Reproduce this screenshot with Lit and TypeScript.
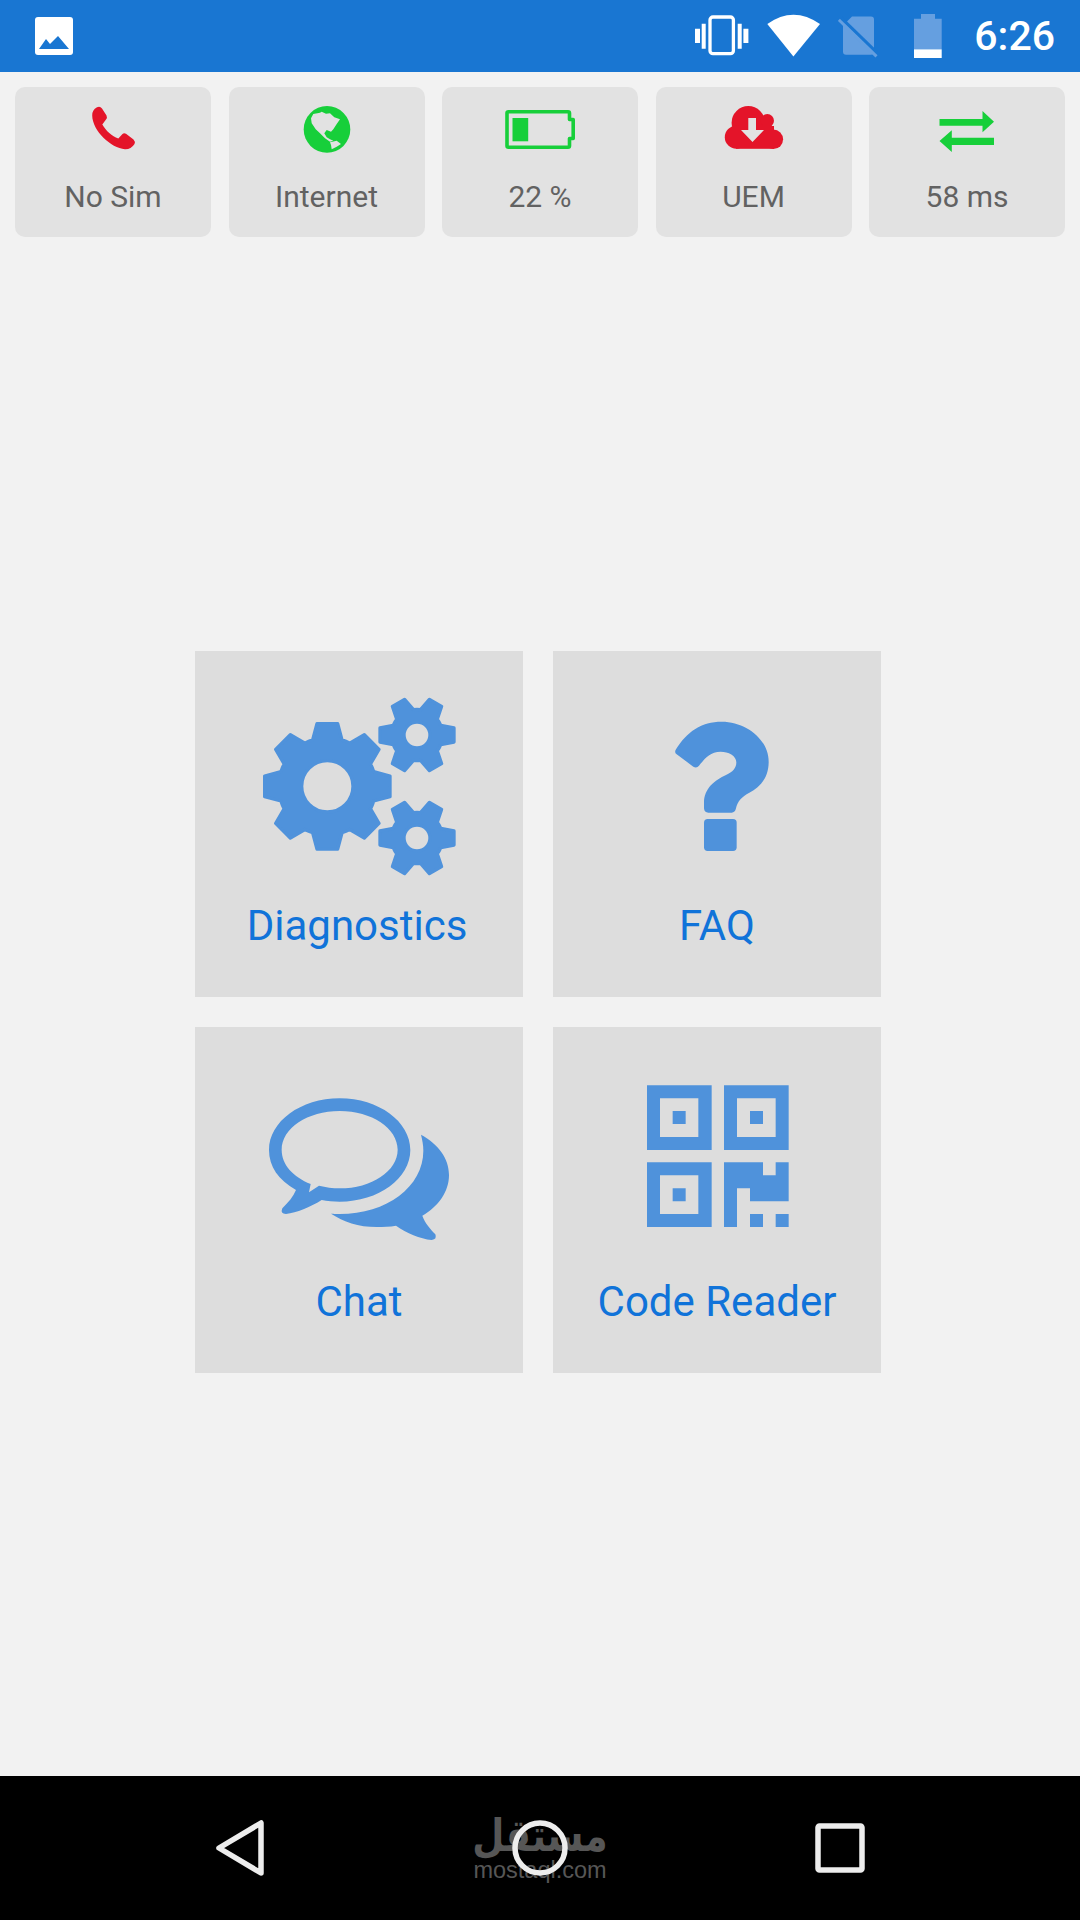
import { LitElement, html, svg, css, TemplateResult, SVGTemplateResult } from 'lit';
import { customElement } from 'lit/decorators.js';

// one gear outline, teeth start pointing up, hole cut with evenodd
function gearPath(
  cx: number,
  cy: number,
  teeth: number,
  rOuter: number,
  rRoot: number,
  tipHalf: number,
  baseHalf: number,
  rHole: number,
  startDeg = 0,
): string {
  const pt = (deg: number, across: number, r: number) => {
    const a = (deg * Math.PI) / 180;
    const ux = Math.sin(a);
    const uy = -Math.cos(a);
    return `${(cx + ux * r + uy * -across).toFixed(1)} ${(cy + uy * r + ux * across).toFixed(1)}`;
  };
  // tooth base sits on the root circle
  const rBase = Math.sqrt(rRoot * rRoot - baseHalf * baseHalf);
  let d = '';
  for (let i = 0; i < teeth; i++) {
    const deg = startDeg + (360 / teeth) * i;
    d += i === 0 ? `M${pt(deg, -baseHalf, rBase)}` : `A${rRoot} ${rRoot} 0 0 1 ${pt(deg, -baseHalf, rBase)}`;
    d += `L${pt(deg, -tipHalf, rOuter)}L${pt(deg, tipHalf, rOuter)}L${pt(deg, baseHalf, rBase)}`;
  }
  d += `A${rRoot} ${rRoot} 0 0 1 ${pt(startDeg, -baseHalf, rBase)}Z`;
  d += `M${cx - rHole} ${cy}a${rHole} ${rHole} 0 1 0 ${rHole * 2} 0a${rHole} ${rHole} 0 1 0 ${-rHole * 2} 0Z`;
  return d;
}

const RED = '#e41429';
const GREEN = '#17cf3a';
const TILE = '#e2e2e2';

const statusTiles: { label: string; icon: SVGTemplateResult }[] = [
  {
    label: 'No Sim',
    icon: svg`<path fill=${RED} d="M24 3.300Q27 1.800 29 4.500L33.500 11.500Q34.500 13.500 33 15.500L29.300 20.500C33 27 39 32 45.300 34.500L49.500 30Q51 28.500 53 29.800L60.500 35.500Q62.500 37.500 61.500 40Q58 45.500 52 45.300C38 44 19.500 27 19.200 11.500Q19 6 24 3.300Z"/>`,
  },
  {
    label: 'Internet',
    icon: svg`<circle cx="40" cy="25.400" r="23.300" fill=${GREEN}/>
      <path fill=${TILE} d="M24 14.300L26.300 10L33 8.700L34.700 7.700L39 9.800L43 9.300L47.300 13.300L53 15.300L49.700 20L46.300 25.300L44 27.700L39.700 26L37.300 29.300L39.700 33.300L43 35.300L46.300 36.700L43 37.700L38 34.300L33 29.300L28.700 25.300L24.700 19.300Z"/>
      <path fill=${TILE} d="M43 38.300L49.700 36.700L54 40L49.700 42.700L44.700 45.300L44 41Z"/>`,
  },
  {
    label: '22 %',
    icon: svg`<path fill="none" stroke=${GREEN} stroke-width="3.600" stroke-linejoin="round" d="M8.500 7.800H68Q69.500 7.800 69.500 9.300V15.500H73.200V34.500H69.500V41.700Q69.500 43.200 68 43.200H8.500Q7 43.200 7 41.700V9.300Q7 7.800 8.500 7.800Z"/>
      <rect x="12.500" y="14" width="15.700" height="23.300" fill=${GREEN}/>`,
  },
  {
    label: 'UEM',
    icon: svg`<g fill=${RED}>
        <circle cx="34.300" cy="18.700" r="16.700"/>
        <circle cx="53.300" cy="16.700" r="6.700"/>
        <circle cx="59.400" cy="35.300" r="9.700"/>
        <circle cx="22.300" cy="33.200" r="11.500"/>
        <rect x="22" y="22" width="38" height="22.800"/>
      </g>
      <path fill=${TILE} d="M34.300 14H42V26H50L38.500 38L27 26H34.300Z"/>`,
  },
  {
    label: '58 ms',
    icon: svg`<path fill=${GREEN} d="M12.500 15H55.500V7L67 17.700L55.500 28.300V21.700H12.500Z"/>
      <path fill=${GREEN} d="M67 33.700H24.800V26.300L12.500 37L24.800 48V41H67Z"/>`,
  },
];

const menuTiles: { label: string; viewBox: string; icon: SVGTemplateResult }[] = [
  {
    label: 'Diagnostics',
    viewBox: '15 33 984 690',
    icon: svg`<g stroke-width="10" stroke-linejoin="round">
      <path fill-rule="evenodd" d=${gearPath(412, 439, 8, 188, 146, 31, 44, 77)}/>
      <path fill-rule="evenodd" d=${gearPath(681, 285, 6, 111, 77, 21, 29, 39, 30)}/>
      <path fill-rule="evenodd" d=${gearPath(681, 594, 6, 111, 77, 21, 29, 39, 30)}/>
    </g>`,
  },
  {
    label: 'FAQ',
    viewBox: '9 33 984 690',
    icon: svg`<path d="M378 328C410 275 455 245 515 245C590 245 656 300 656 365C656 415 630 440 598 458C575 470 562 485 558 505Q555 518 545 518L475 518Q463 518 462 505L462 488C462 445 495 420 528 405C548 396 559 385 559 367C559 347 535 335 512 335C480 335 465 355 447 377Q440 386 430 380L380 343Q372 337 378 328Z"/>
      <rect x="462" y="537" width="98" height="96" rx="11"/>`,
  },
  {
    label: 'Chat',
    viewBox: '15 21 984 690',
    icon: svg`<path fill-rule="evenodd" d="M318 510C265 480 237 440 237 390C237 305 332 235 449 235C566 235 661 305 661 390C661 475 566 545 449 545C430 545 412 543 395 540C360 562 320 578 288 582Q270 582 277 565C295 547 310 530 318 510ZM362 492C310 470 275 435 275 389C275 325 353 273 449 273C545 273 623 325 623 389C623 453 545 505 449 505C428 505 407 502 387 497L357 517Z"/>
      <path d="M693 344C745 372 777 415 777 465C777 515 745 560 697 587C705 610 722 628 736 643Q742 658 725 660C690 656 650 640 618 617C600 620 580 621 560 621C505 621 460 605 423 581C440 582 445 582 449 582C590 582 700 500 700 392C700 375 697 360 693 344Z"/>`,
  },
  {
    label: 'Code Reader',
    viewBox: '9 21 984 690',
    icon: svg`<path fill-rule="evenodd" d="M291 196H485V390H291ZM330 235V351H445V235ZM368 273H407V312H368Z"/>
      <path fill-rule="evenodd" d="M522 196H716V390H522ZM561 235V351H677V235ZM600 273H639V312H600Z"/>
      <path fill-rule="evenodd" d="M291 427H485V621H291ZM330 466V582H445V466ZM368 505H407V544H368Z"/>
      <path d="M522 427H639V466H677V427H716V544H600V505H561V621H522Z"/>
      <rect x="600" y="582" width="39" height="39"/>
      <rect x="677" y="582" width="39" height="39"/>`,
  },
];

@customElement('app-root')
export class AppRoot extends LitElement {
  renderStatusBar(): TemplateResult {
    return html`
      <header class="status-bar">
        <svg width="38" height="44" viewBox="35 14 38 44">
          <rect x="35" y="17" width="38" height="38" rx="3" fill="#fff" />
          <path d="M39 49L46 39L50 44L58 36L69 49Z" fill="#1976d2" />
        </svg>
        <svg class="sys first" width="54" height="44" viewBox="695 14 54 44">
          <rect x="710" y="17" width="23.400" height="36.700" rx="3" fill="none" stroke="#fff" stroke-width="3.300" />
          <path d="M695 28.700H700V43H695ZM701.700 23.700H705.700V48.700H701.700ZM737.700 23.700H741.700V48.700H737.700ZM743.400 28.700H748.400V43H743.400Z" fill="#fff" />
        </svg>
        <svg class="sys tight" width="54" height="44" viewBox="766 14 54 44">
          <path d="M767.300 24Q793.400 5.400 820 24L793.400 56.500Z" fill="#fff" />
        </svg>
        <svg class="sys" width="40" height="44" viewBox="838 14 40 44">
          <path d="M852 16.400H871Q874 16.400 874 19.400V51.700Q874 54.700 871 54.700H846Q843 54.700 843 51.700V25.400Z" fill="#659fe0" />
          <path d="M841 18L879 55" stroke="#1976d2" stroke-width="3.500" />
          <path d="M838.800 19.800L876.500 56.300" stroke="#659fe0" stroke-width="3" />
        </svg>
        <svg class="sys wide" width="28" height="44" viewBox="914 14 28 44">
          <path d="M921 14H935V18.700H941.700V49.300H914V18.700H921Z" fill="#659fe0" />
          <rect x="914" y="49.300" width="27.700" height="8.700" fill="#fff" />
        </svg>
        <span class="time">6:26</span>
      </header>
    `;
  }

  renderNav(): TemplateResult {
    return html`
      <nav class="nav">
        <div class="watermark">
          <span class="wm-ar">مستقل</span>
          <span class="wm-en">mostaql.com</span>
        </div>
        <svg class="nav-icon" width="48" height="56" viewBox="0 0 48 56">
          <path d="M45 3V53L3 28Z" fill="none" stroke="#ededed" stroke-width="5.500" stroke-linejoin="round" />
        </svg>
        <svg class="nav-icon" width="56" height="56" viewBox="0 0 56 56">
          <circle cx="28" cy="28" r="25" fill="none" stroke="#ededed" stroke-width="5.500" />
        </svg>
        <svg class="nav-icon" width="50" height="50" viewBox="0 0 50 50">
          <rect x="3" y="3" width="44" height="44" rx="1.500" fill="none" stroke="#ededed" stroke-width="5.500" />
        </svg>
      </nav>
    `;
  }

  render(): TemplateResult {
    return html`
      ${this.renderStatusBar()}
      <section class="status-row">
        ${statusTiles.map(
          t => html`
            <div class="status-tile">
              <svg width="80" height="50" viewBox="0 0 80 50">${t.icon}</svg>
              <span>${t.label}</span>
            </div>
          `,
        )}
      </section>
      <section class="menu">
        ${menuTiles.map(
          t => html`
            <div class="menu-tile">
              <svg width="328" height="230" viewBox=${t.viewBox}>${t.icon}</svg>
              <span>${t.label}</span>
            </div>
          `,
        )}
      </section>
      ${this.renderNav()}
    `;
  }

  static styles = css`
    :host {
      display: flex;
      flex-direction: column;
      height: 1920px;
      background: #f2f2f2;
      font-family: Roboto, 'Liberation Sans', sans-serif;
      overflow: hidden;
    }
    svg {
      display: block;
    }
    .status-bar {
      display: flex;
      align-items: center;
      flex: none;
      height: 72px;
      background: #1976d2;
      padding: 0 25px 0 35px;
    }
    .sys {
      margin-left: 18px;
    }
    .sys.tight {
      margin-left: 17px;
    }
    .sys.first {
      margin-left: auto;
    }
    .sys.wide {
      margin-left: 36px;
    }
    .time {
      margin-left: 32px;
      color: #fff;
      font-size: 41px;
      font-weight: 500;
      line-height: 48px;
    }
    .status-row {
      display: flex;
      gap: 17.5px;
      flex: none;
      padding: 15px 15px 0;
    }
    .status-tile {
      display: flex;
      flex-direction: column;
      align-items: center;
      width: 196px;
      height: 150px;
      box-sizing: border-box;
      padding-top: 17px;
      background: #e2e2e2;
      border-radius: 10px;
      color: #626262;
      font-size: 30px;
      line-height: 36px;
    }
    .status-tile span {
      margin-top: 25px;
    }
    .menu {
      display: grid;
      grid-template-columns: 328px 328px;
      grid-auto-rows: 346px;
      gap: 30px;
      flex: none;
      margin: 414px 0 0 195px;
    }
    .menu-tile {
      display: flex;
      flex-direction: column;
      align-items: center;
      background: #dddddd;
      color: #1073d9;
      font-size: 42px;
      line-height: 50px;
    }
    .menu-tile svg {
      fill: #4f92db;
      stroke: #4f92db;
      stroke-width: 0;
    }
    .menu-tile span {
      margin-top: 20px;
    }
    .menu-tile:first-child span {
      margin-right: 4px;
    }
    .nav {
      position: relative;
      display: flex;
      align-items: center;
      justify-content: space-between;
      flex: none;
      height: 144px;
      margin-top: auto;
      padding: 0 215px 0 216px;
      background: #000;
    }
    .nav-icon {
      position: relative;
    }
    .watermark {
      position: absolute;
      left: 474px;
      top: 44px;
      width: 132px;
      display: flex;
      flex-direction: column;
      align-items: center;
      gap: 3px;
      color: #565656;
    }
    .wm-ar {
      font-family: 'DejaVu Sans', sans-serif;
      font-weight: 700;
      font-size: 37px;
      line-height: 37px;
      transform: scaleY(1.2);
      transform-origin: center 31px;
    }
    .wm-en {
      font-family: 'Liberation Sans', sans-serif;
      font-size: 23.5px;
      line-height: 20px;
    }
  `;
}
